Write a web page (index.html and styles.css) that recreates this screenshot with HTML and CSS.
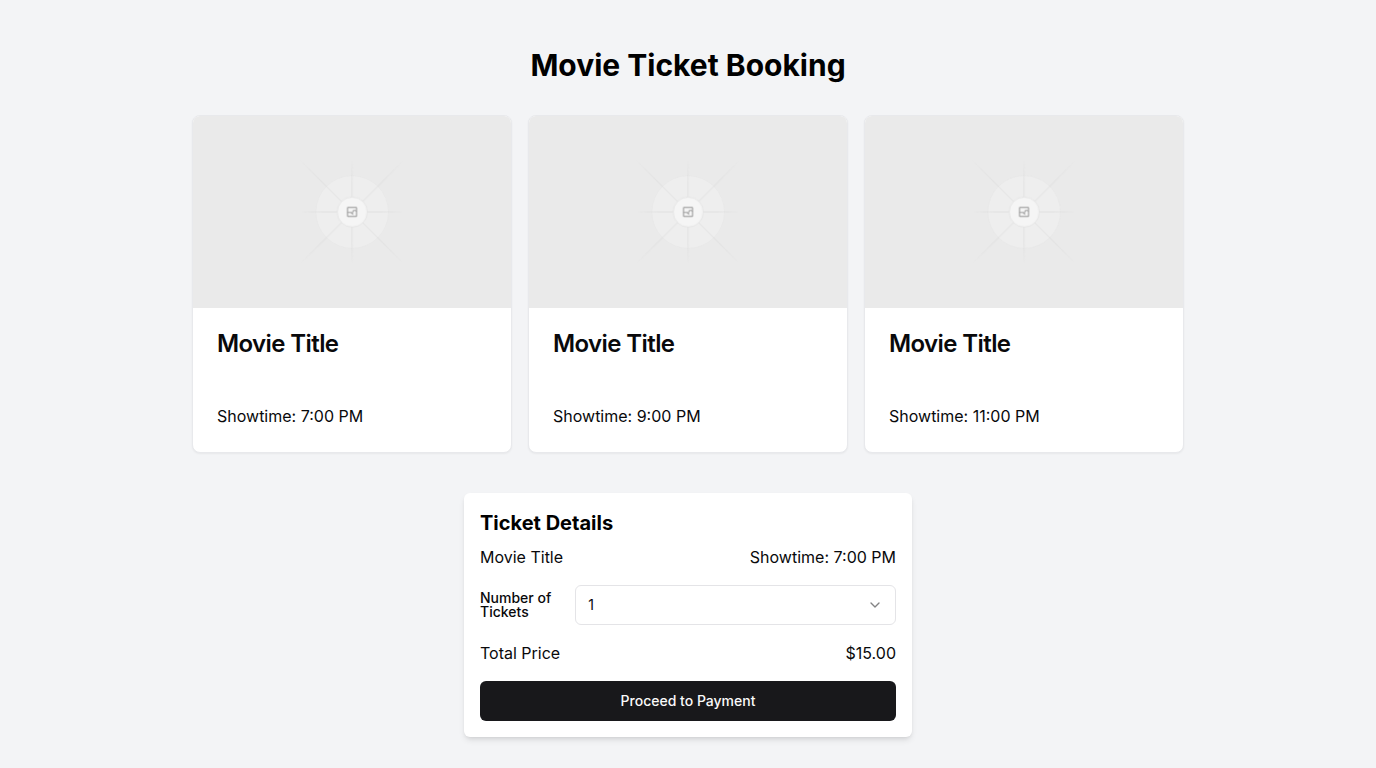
FILE: index.html
```html
<!DOCTYPE html>
<html lang="en">
<head>
  <meta charset="utf-8">
  <meta name="viewport" content="width=device-width, initial-scale=1">
  <title>Movie Ticket Booking</title>
  <link rel="stylesheet" href="styles.css">
</head>
<body>
  <svg class="sprite" aria-hidden="true">
    <defs>
      <linearGradient id="ray" gradientUnits="userSpaceOnUse" x1="404" y1="0" x2="796" y2="0">
        <stop stop-color="#c9c9c9" stop-opacity="0"/>
        <stop offset=".208" stop-color="#c9c9c9"/>
        <stop offset=".792" stop-color="#c9c9c9"/>
        <stop offset="1" stop-color="#c9c9c9" stop-opacity="0"/>
      </linearGradient>
      <linearGradient id="ray-long" gradientUnits="userSpaceOnUse" x1="323" y1="0" x2="877" y2="0">
        <stop stop-color="#c9c9c9" stop-opacity="0"/>
        <stop offset=".208" stop-color="#c9c9c9"/>
        <stop offset=".792" stop-color="#c9c9c9"/>
        <stop offset="1" stop-color="#c9c9c9" stop-opacity="0"/>
      </linearGradient>
      <symbol id="poster" viewBox="0 0 1200 1200" preserveAspectRatio="xMidYMid slice">
        <rect width="1200" height="1200" fill="#eaeaea"/>
        <circle cx="600.7" cy="600" r="137" fill="#eeeeee" stroke="#e7e7e7" stroke-width="2.4"/>
        <g fill="none" stroke-width="2.4" opacity=".5">
          <path d="M404 600h392" stroke="url(#ray)"/>
          <path d="M404 600h392" stroke="url(#ray)" transform="rotate(90 600 600)"/>
          <path d="M323 600h554" stroke="url(#ray-long)" transform="rotate(45 600 600)"/>
          <path d="M323 600h554" stroke="url(#ray-long)" transform="rotate(-45 600 600)"/>
        </g>
        <circle cx="600.7" cy="600" r="56.6" fill="#f5f5f5" stroke="#dcdcdc" stroke-width="2.4"/>
        <g transform="translate(600 600) scale(3.7736)" fill="none" stroke="#a0a0a0">
          <rect x="-4.5" y="-4.5" width="9" height="9" rx=".5" stroke="#959595"/>
          <path d="M-4.5.5H-1L.5 2V0l1-1.5h2l1 1"/>
        </g>
      </symbol>
    </defs>
  </svg>

  <main class="page">
    <h1 class="page-title">Movie Ticket Booking</h1>

    <section class="movies" aria-label="Movies">
      <article class="card">
        <svg class="card-poster" role="img" aria-label="Movie poster"><use href="#poster"/></svg>
        <h2 class="card-title">Movie Title</h2>
        <p class="card-text">Showtime: 7:00 PM</p>
      </article>
      <article class="card">
        <svg class="card-poster" role="img" aria-label="Movie poster"><use href="#poster"/></svg>
        <h2 class="card-title">Movie Title</h2>
        <p class="card-text">Showtime: 9:00 PM</p>
      </article>
      <article class="card">
        <svg class="card-poster" role="img" aria-label="Movie poster"><use href="#poster"/></svg>
        <h2 class="card-title">Movie Title</h2>
        <p class="card-text">Showtime: 11:00 PM</p>
      </article>
    </section>

    <form class="details">
      <h2 class="details-title">Ticket Details</h2>
      <div class="row">
        <span>Movie Title</span>
        <span>Showtime: 7:00 PM</span>
      </div>
      <div class="row">
        <label class="label" for="tickets">Number of Tickets</label>
        <div class="select-wrap">
          <select class="select" id="tickets">
            <option>1</option>
            <option>2</option>
            <option>3</option>
            <option>4</option>
          </select>
          <svg class="chevron" viewBox="0 0 24 24" aria-hidden="true"><path d="m6 9 6 6 6-6"/></svg>
        </div>
      </div>
      <div class="row">
        <span>Total Price</span>
        <span>$15.00</span>
      </div>
      <button class="button" type="button">Proceed to Payment</button>
    </form>
  </main>
</body>
</html>
```

FILE: styles.css
```css
*,
*::before,
*::after {
  box-sizing: border-box;
}

body,
h1,
h2,
p {
  margin: 0;
}

body {
  background: #f3f4f6;
  color: #09090b;
  font-family: Inter, "Liberation Sans", sans-serif;
  font-size: 16px;
  line-height: 24px;
}

.sprite {
  position: absolute;
  width: 0;
  height: 0;
}

.page {
  display: flex;
  flex-direction: column;
  align-items: center;
  justify-content: center;
  min-height: 100vh;
  padding: 16px 16px 0;
}

.page-title {
  margin-bottom: 32px;
  color: #000;
  font-size: 30px;
  font-weight: 700;
  line-height: 36px;
}

.movies {
  display: grid;
  grid-template-columns: repeat(3, 1fr);
  gap: 16px;
  width: 100%;
  max-width: 992px;
  margin-bottom: 40px;
}

.card {
  overflow: hidden;
  border: 1px solid #e8e9ec;
  border-radius: 8px;
  background: #fff;
  box-shadow: 0 1px 2px rgb(0 0 0 / 5%);
}

.card-poster {
  display: block;
  width: 100%;
  height: 192px;
}

.card-title {
  padding: 24px;
  font-size: 24px;
  font-weight: 600;
  line-height: 24px;
  letter-spacing: -0.025em;
}

.card-text {
  padding: 24px;
}

.details {
  display: flex;
  flex-direction: column;
  gap: 16px;
  width: 100%;
  max-width: 448px;
  padding: 16px;
  border-radius: 6px;
  background: #fff;
  box-shadow: 0 4px 6px -1px rgb(0 0 0 / 10%), 0 2px 4px -2px rgb(0 0 0 / 10%);
}

.details-title {
  margin-bottom: -8px;
  color: #000;
  font-size: 20px;
  font-weight: 700;
  line-height: 28px;
}

.row {
  display: flex;
  align-items: center;
  justify-content: space-between;
}

.label {
  font-size: 14px;
  font-weight: 500;
  line-height: 14px;
}

.select-wrap {
  display: grid;
  align-items: center;
  width: 100%;
}

.select,
.chevron {
  grid-area: 1 / 1;
}

.select {
  width: 100%;
  height: 40px;
  padding: 0 12px;
  border: 1px solid #e4e4e7;
  border-radius: 6px;
  appearance: none;
  background: #fff;
  color: inherit;
  font: inherit;
  font-size: 14px;
}

.chevron {
  justify-self: end;
  width: 16px;
  height: 16px;
  margin-right: 13px;
  fill: none;
  stroke: currentColor;
  stroke-width: 2;
  stroke-linecap: round;
  stroke-linejoin: round;
  opacity: 0.5;
  pointer-events: none;
}

.button {
  height: 40px;
  padding: 0 16px;
  border: 0;
  border-radius: 6px;
  background: #18181b;
  color: #fafafa;
  font: inherit;
  font-size: 14px;
  font-weight: 500;
  cursor: pointer;
}
```
